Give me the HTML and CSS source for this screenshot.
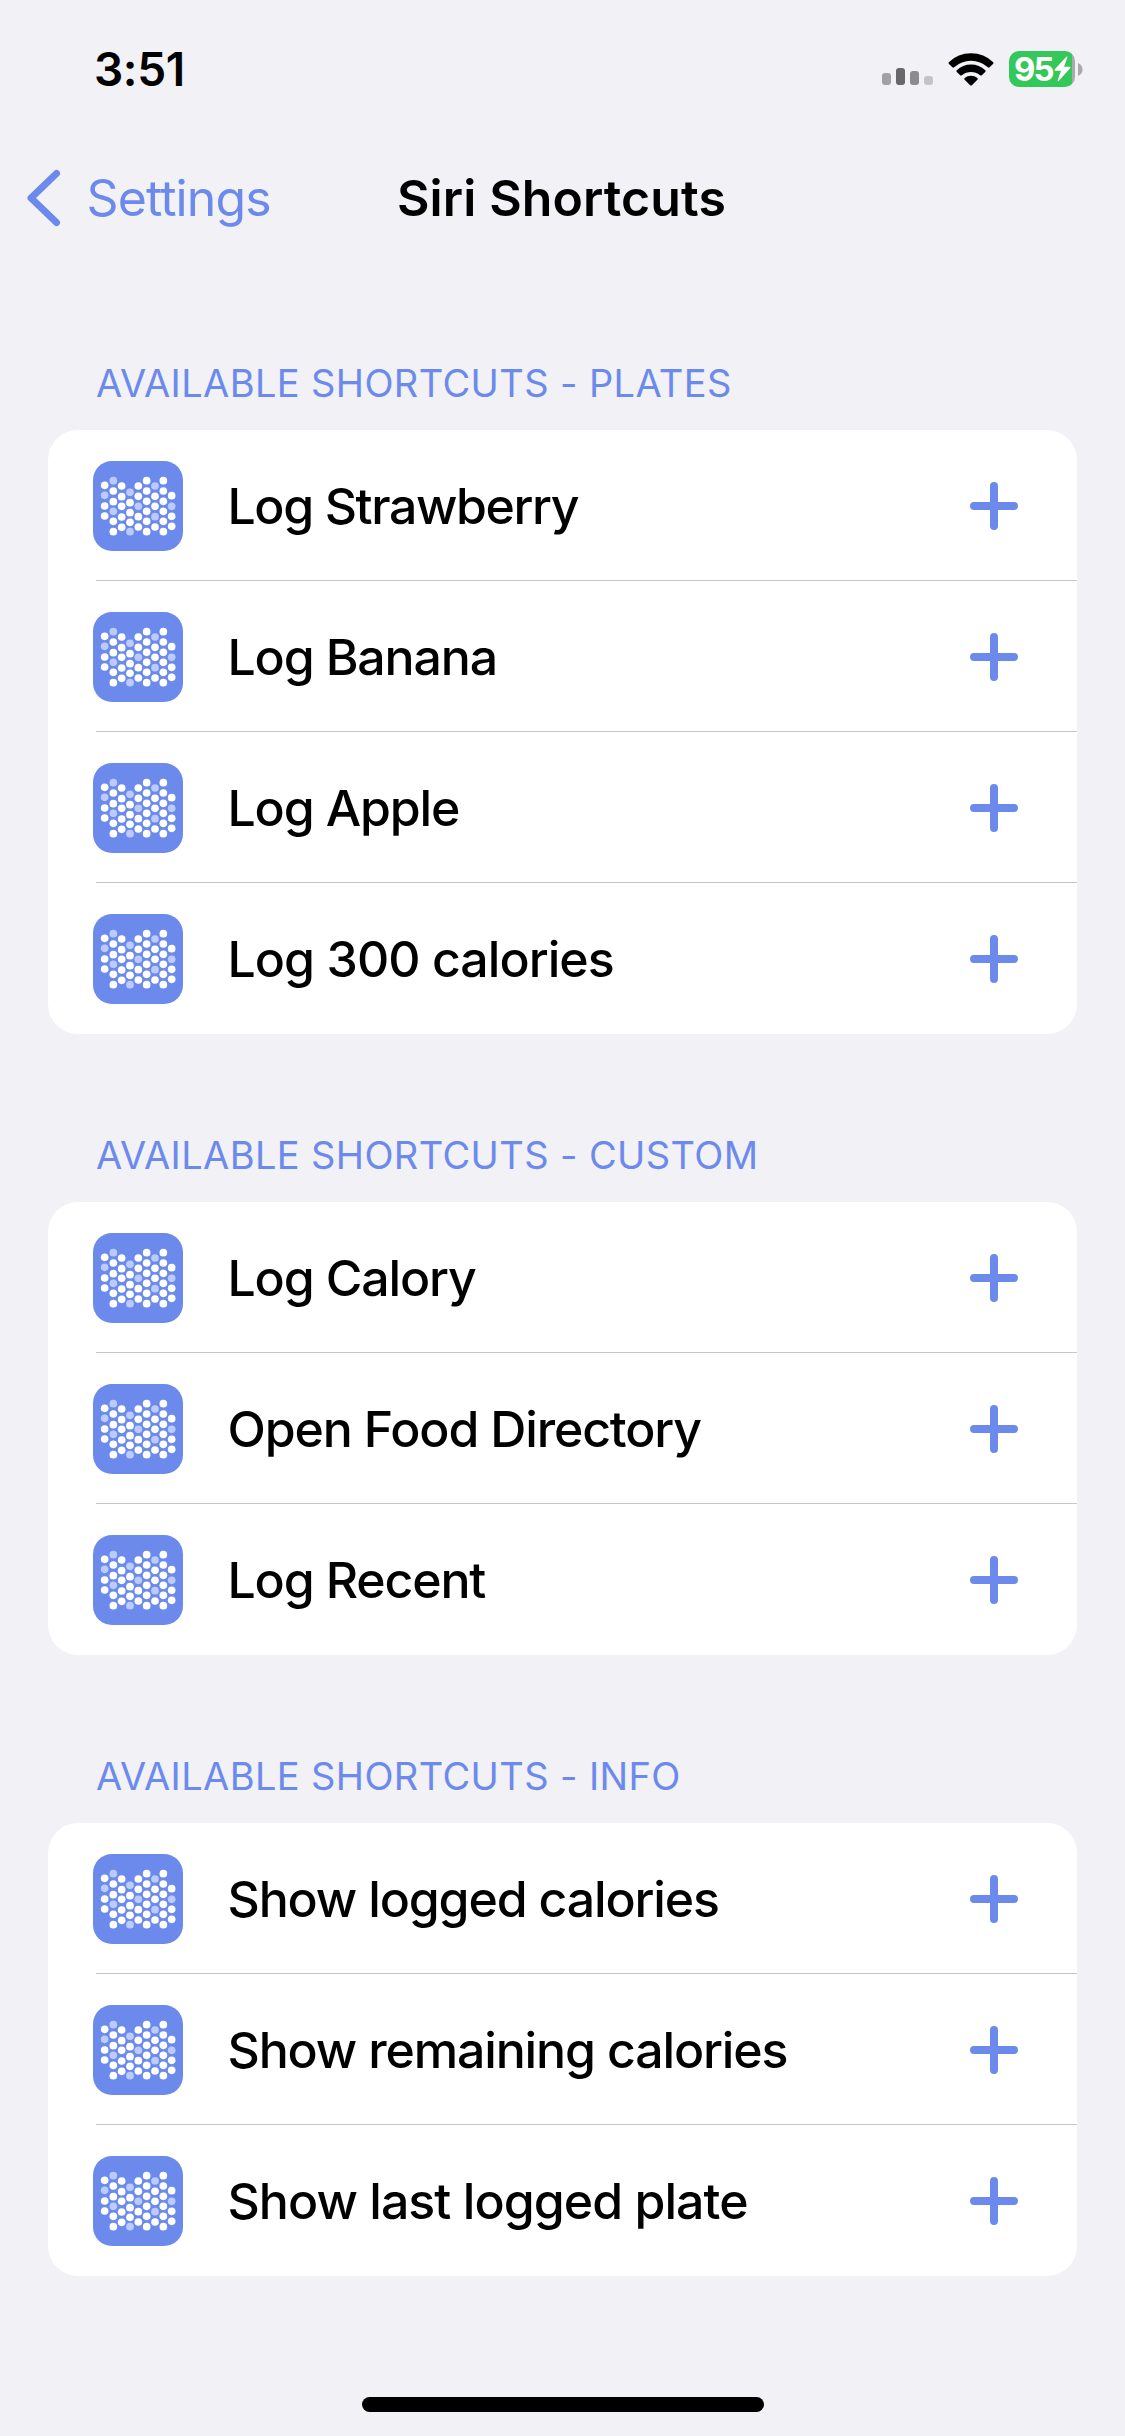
FILE: index.html
```
<!DOCTYPE html>
<html lang="en">
<head>
<meta charset="utf-8">
<title>Siri Shortcuts</title>
<link rel="stylesheet" href="styles.css">
</head>
<body>
<svg class="defs" aria-hidden="true">
  <symbol id="app" viewBox="0 0 270 270">
    <rect width="270" height="270" rx="57" fill="#6c8aec"/>
    <g fill="#fff">
      <circle cx="35" cy="73" r="11.5"/><circle cx="35" cy="135" r="11.5"/><circle cx="35" cy="165" r="11.5"/>
      <circle cx="61" cy="90" r="11.5"/><circle cx="61" cy="122" r="11.5"/><circle cx="61" cy="181" r="11.5"/><circle cx="61" cy="212" r="11.5"/>
      <circle cx="86" cy="75" r="11.5"/><circle cx="86" cy="107" r="11.5"/><circle cx="86" cy="136" r="11.5"/><circle cx="86" cy="168" r="11.5"/><circle cx="86" cy="199" r="11.5"/>
      <circle cx="111" cy="125" r="11.5"/><circle cx="111" cy="155" r="11.5"/><circle cx="111" cy="184" r="11.5"/>
      <circle cx="136" cy="75" r="11.5"/><circle cx="136" cy="106" r="11.5"/><circle cx="136" cy="167" r="11.5"/><circle cx="136" cy="198" r="11.5"/>
      <circle cx="161" cy="59" r="11.5"/><circle cx="161" cy="90" r="11.5"/><circle cx="161" cy="121" r="11.5"/><circle cx="161" cy="151" r="11.5"/><circle cx="161" cy="181" r="11.5"/><circle cx="161" cy="212" r="11.5"/>
      <circle cx="186" cy="106" r="11.5"/><circle cx="186" cy="136" r="11.5"/><circle cx="186" cy="198" r="11.5"/>
      <circle cx="211" cy="59" r="11.5"/><circle cx="211" cy="90" r="11.5"/><circle cx="211" cy="121" r="11.5"/><circle cx="211" cy="151" r="11.5"/><circle cx="211" cy="181" r="11.5"/><circle cx="211" cy="212" r="11.5"/>
      <circle cx="236" cy="104" r="11.5"/><circle cx="236" cy="166" r="11.5"/><circle cx="236" cy="196" r="11.5"/>
    </g>
    <g fill="#bccbfd">
      <circle cx="35" cy="103" r="11.5"/><circle cx="61" cy="59" r="11.5"/><circle cx="61" cy="151" r="11.5"/><circle cx="111" cy="94" r="11.5"/><circle cx="111" cy="212" r="11.5"/><circle cx="136" cy="136" r="11.5"/><circle cx="186" cy="75" r="11.5"/><circle cx="186" cy="167" r="11.5"/><circle cx="236" cy="136" r="11.5"/>
    </g>
  </symbol>
  <symbol id="plus" viewBox="0 0 48 48">
    <path d="M24 4v40M4 24h40" fill="none" stroke="#6c8aec" stroke-width="8" stroke-linecap="round"/>
  </symbol>
</svg>

<header class="status">
  <span class="time">3:51</span>
  <div class="indicators">
    <div class="signal"><i class="bar b1"></i><i class="bar b2"></i><i class="bar b3"></i><i class="bar b4"></i></div>
    <svg class="wifi" viewBox="0 0 46 33">
      <path d="M0.8 9.2Q0.1 10.1 1 11L4.4 14.3Q5.2 15 6.1 14.3Q13.5 7.8 23 7.8Q32.500 7.8 39.9 14.300Q40.800 15 41.600 14.300L45 11Q45.900 10.100 45.200 9.200Q36 0.300 23 0.300Q10 0.300 0.800 9.200Z"/>
      <path d="M8.700 17.300Q8 18.100 8.800 18.900L12.200 22.200Q13 22.900 13.900 22.200Q18 18.900 23 18.900Q28 18.900 32.100 22.200Q33 22.900 33.800 22.200L37.200 18.900Q38 18.100 37.300 17.300Q31.200 11.600 23 11.600Q14.800 11.600 8.700 17.300Z"/>
      <path d="M16.600 25.100Q15.900 25.900 16.600 26.700L22.100 32.200Q23 33 23.900 32.200L29.400 26.700Q30.100 25.900 29.400 25.100Q26.700 22.700 23 22.700Q19.300 22.700 16.600 25.100Z"/>
    </svg>
    <div class="battery">
      <div class="cell">
        <span class="level">95</span>
        <svg class="bolt" viewBox="0 0 17 26"><path d="M12.300 0.800L0.600 13.600Q0 14.600 1.200 14.700H7L3.600 24.200Q3.500 25.600 4.700 24.900L16.300 11.900Q16.900 10.900 15.700 10.800H10L13.400 1.500Q13.500 0.100 12.300 0.800Z" fill="#fff"/></svg>
      </div>
      <svg class="nub" viewBox="0 0 5 13"><path d="M0 0Q4.500 2 4.500 6.500Q4.500 11 0 13Z" fill="#a9a9ae"/></svg>
    </div>
  </div>
</header>

<nav class="nav">
  <a class="back">
    <svg class="chevron" viewBox="0 0 34 58"><path d="M29.500 4.500L4 29L29.500 53.500" fill="none" stroke="#6c8aec" stroke-width="7" stroke-linecap="round" stroke-linejoin="round"/></svg>
    <span>Settings</span>
  </a>
  <h1 class="title">Siri Shortcuts</h1>
</nav>

<main class="content">
  <section>
    <h2 class="label">AVAILABLE SHORTCUTS - PLATES</h2>
    <ul class="card">
      <li class="row"><svg class="app"><use href="#app"/></svg><span class="name tight">Log Strawberry</span><svg class="plus"><use href="#plus"/></svg></li>
      <li class="row"><svg class="app"><use href="#app"/></svg><span class="name">Log Banana</span><svg class="plus"><use href="#plus"/></svg></li>
      <li class="row"><svg class="app"><use href="#app"/></svg><span class="name">Log Apple</span><svg class="plus"><use href="#plus"/></svg></li>
      <li class="row"><svg class="app"><use href="#app"/></svg><span class="name loose">Log 300 calories</span><svg class="plus"><use href="#plus"/></svg></li>
    </ul>
  </section>
  <section>
    <h2 class="label">AVAILABLE SHORTCUTS - CUSTOM</h2>
    <ul class="card">
      <li class="row"><svg class="app"><use href="#app"/></svg><span class="name">Log Calory</span><svg class="plus"><use href="#plus"/></svg></li>
      <li class="row"><svg class="app"><use href="#app"/></svg><span class="name">Open Food Directory</span><svg class="plus"><use href="#plus"/></svg></li>
      <li class="row"><svg class="app"><use href="#app"/></svg><span class="name">Log Recent</span><svg class="plus"><use href="#plus"/></svg></li>
    </ul>
  </section>
  <section>
    <h2 class="label">AVAILABLE SHORTCUTS - INFO</h2>
    <ul class="card">
      <li class="row"><svg class="app"><use href="#app"/></svg><span class="name">Show logged calories</span><svg class="plus"><use href="#plus"/></svg></li>
      <li class="row"><svg class="app"><use href="#app"/></svg><span class="name">Show remaining calories</span><svg class="plus"><use href="#plus"/></svg></li>
      <li class="row"><svg class="app"><use href="#app"/></svg><span class="name loose">Show last logged plate</span><svg class="plus"><use href="#plus"/></svg></li>
    </ul>
  </section>
</main>
<div class="home"></div>
</body>
</html>
```
FILE: styles.css
```
* { box-sizing: border-box; margin: 0; padding: 0; }

body {
  width: 1125px;
  height: 2436px;
  overflow: hidden;
  display: flex;
  flex-direction: column;
  background: #f1f1f6;
  color: #000;
  font-family: Inter, "Liberation Sans", sans-serif;
}

svg { display: block; flex: none; }
.defs { width: 0; height: 0; position: absolute; }

/* Status bar */
.status {
  height: 138px;
  padding: 0 42px 0 94px;
  display: flex;
  align-items: center;
  justify-content: space-between;
}
.time { font-size: 46px; font-weight: 600; letter-spacing: -0.4px; }
.indicators { display: flex; align-items: center; }
.signal { display: flex; align-items: flex-end; gap: 5px; height: 17px; margin: 15px 15px 0 0; }
.bar { width: 9px; border-radius: 3px; }
.b1 { height: 12px; background: #a0a0a5; }
.b2 { height: 17px; background: #68686c; }
.b3 { height: 14px; background: #8b8b90; }
.b4 { height: 9px; background: #c3c3c8; }
.wifi { width: 46px; height: 33px; margin-right: 15px; }
.battery { display: flex; align-items: center; gap: 3px; }
.cell {
  width: 66px;
  height: 36px;
  padding-left: 5px;
  display: flex;
  align-items: center;
  border-radius: 10px;
  background: linear-gradient(90deg, #34c759 63px, #a9a9ae 63px);
  color: #fff;
}
.level { width: 40px; font-size: 33px; font-weight: 700; line-height: 36px; letter-spacing: -2px; }
.bolt { width: 17px; height: 26px; }
.nub { width: 5px; height: 13px; }

/* Navigation bar */
.nav {
  height: 120px;
  padding: 0 27px;
  display: grid;
  grid-template-columns: 370px 1fr;
  align-items: center;
}
.back { display: flex; align-items: center; gap: 25.500px; color: #6c8aec; font-size: 50px; letter-spacing: -0.9px; }
.chevron { width: 34px; height: 58px; }
.title { font-size: 50px; font-weight: 600; letter-spacing: 0.1px; }

/* Shortcut lists */
.content { padding: 95px 48px 0; display: flex; flex-direction: column; gap: 91px; }
.label {
  height: 77px;
  padding: 0 0 17px 48px;
  font-size: 38px;
  font-weight: 400;
  line-height: 60px;
  letter-spacing: 0.38px;
  color: #6c8aec;
  white-space: nowrap;
}
.card { list-style: none; background: #fff; border-radius: 30px; }
.row {
  height: 151px;
  padding: 0 59px 0 45px;
  display: flex;
  align-items: center;
  background: linear-gradient(#c6c6c8, #c6c6c8) 48px 100% / 100% 1px no-repeat;
}
.row:last-child { background: none; }
.app { width: 90px; height: 90px; }
.name {
  flex: 1;
  margin-left: 44.500px;
  font-size: 50px;
  font-weight: 500;
  line-height: 60px;
  letter-spacing: -1.15px;
  white-space: nowrap;
}
.tight { letter-spacing: -1.4px; }
.loose { letter-spacing: -0.95px; }
.plus { width: 48px; height: 48px; margin-top: 1px; }

.home { width: 402px; height: 15px; margin: 121px 0 0 362px; border-radius: 8px; background: #000; }
```
